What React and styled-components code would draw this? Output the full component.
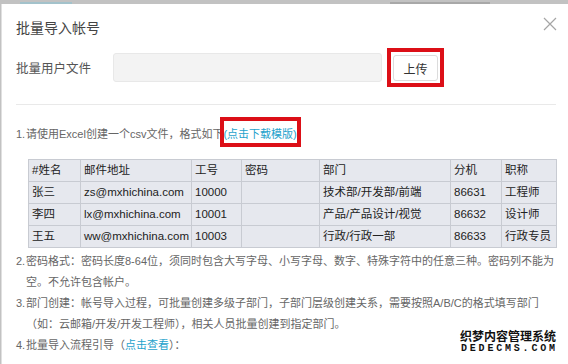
import React from "react";
import styled, { createGlobalStyle } from "styled-components";

const GlobalStyle = createGlobalStyle`
  html, body {
    margin: 0;
    padding: 0;
  }
  body {
    background: #c2c2c2;
    font-family: "Liberation Sans", "Noto Sans CJK SC", sans-serif;
    overflow: hidden;
  }
`;

const Strip = styled.div`
  height: 4px;
  display: flex;
  align-items: flex-end;
`;

const StripMark = styled.span`
  margin-left: ${p => p.$left}px;
  width: ${p => p.$width}px;
  height: 2px;
  background: ${p => p.$color};
  opacity: 0.45;
`;

const Modal = styled.div`
  position: relative;
  margin-left: 1px;
  height: 360px;
  background: #fff;
  border-left: 1px solid #e0e0e0;
  padding: 0 12px 0 14px;
  box-sizing: border-box;
  color: #666;
`;

const Header = styled.div`
  display: flex;
  justify-content: space-between;
  align-items: flex-start;
  padding-top: 13px;
  height: 34px;
  box-sizing: border-box;
`;

const Title = styled.div`
  margin-top: 1px;
  font-size: 14px;
  line-height: 20px;
  color: #444;
`;

const Close = styled.button`
  width: 14px;
  height: 14px;
  padding: 0;
  margin-right: -1px;
  border: 0;
  background: none;
  display: flex;
  cursor: pointer;
`;

const FormRow = styled.div`
  display: flex;
  align-items: center;
  margin-top: 10px;
  height: 39px;
`;

const Label = styled.div`
  width: 97px;
  font-size: 12.5px;
  color: #555;
`;

const FileInput = styled.div`
  width: 269px;
  height: 29px;
  box-sizing: border-box;
  background: #f3f3f3;
  border: 1px solid #e8e8e8;
  border-radius: 3px;
`;

const Highlight = styled.div`
  margin-left: 5px;
  border: 4px solid #dc0f17;
  padding: 3px 2px 2px 2px;
  display: flex;
`;

const UploadButton = styled.button`
  width: 45px;
  height: 26px;
  box-sizing: border-box;
  background: #fff;
  border: 1px solid #dcdcdc;
  border-radius: 3px;
  font-family: "Liberation Sans", "Noto Sans CJK SC", sans-serif;
  font-size: 12px;
  color: #333;
  padding: 0;
`;

const Divider = styled.div`
  margin-top: 17px;
  height: 1px;
  background: #e9e9e9;
`;

const Notes = styled.div`
  padding-top: 19px;
  font-size: 11px;
  line-height: 21px;
`;

const Item = styled.div`
  position: relative;
  display: flex;
  margin-top: ${p => p.$gap || 0}px;
`;

const Num = styled.span`
  flex: none;
  width: 10px;
`;

const Link = styled.a`
  color: #1ea2cc;
  text-decoration: none;
`;

/* red annotation frame laid over the template link */
const Frame = styled.span`
  position: absolute;
  left: 204px;
  top: -7px;
  width: 81px;
  height: 30px;
  box-sizing: border-box;
  border: 4px solid #dc0f17;
  pointer-events: none;
`;

const Table = styled.table`
  margin: 14px 0 0 12px;
  width: 528px;
  border-collapse: collapse;
  table-layout: fixed;
  background: #e6e8ee;
  font-size: 11.5px;
  color: #222;
`;

const Cell = styled.td`
  height: 21px;
  padding: 0 0 0 3px;
  border: 1px solid #c8cbd2;
  white-space: nowrap;
  overflow: hidden;
`;

const Watermark = styled.div`
  position: absolute;
  right: 12px;
  bottom: 10px;
  display: flex;
  flex-direction: column;
  align-items: center;
  color: #111;
  font-weight: bold;
  text-shadow: 0 0 1px #fff, 0 0 1px #fff;
`;

const MarkCn = styled.div`
  font-size: 12px;
  line-height: 14px;
  font-family: "Noto Sans CJK SC", sans-serif;
`;

const MarkEn = styled.div`
  font-family: "Liberation Mono", monospace;
  font-size: 10px;
  line-height: 11px;
  letter-spacing: 2.8px;
  margin-right: -2.8px;
`;

const widths = [52, 111, 50, 78, 131, 51, 55];

const rows = [
  ["#姓名", "邮件地址", "工号", "密码", "部门", "分机", "职称"],
  ["张三", "zs@mxhichina.com", "10000", "", "技术部/开发部/前端", "86631", "工程师"],
  ["李四", "lx@mxhichina.com", "10001", "", "产品/产品设计/视觉", "86632", "设计师"],
  ["王五", "ww@mxhichina.com", "10003", "", "行政/行政一部", "86633", "行政专员"]
];

const SampleTable = () => (
  <Table>
    <colgroup>
      {widths.map((w, i) => (
        <col key={i} style={{ width: w }} />
      ))}
    </colgroup>
    <tbody>
      {rows.map((r, i) => (
        <tr key={i}>
          {r.map((c, j) => (
            <Cell key={j}>{c}</Cell>
          ))}
        </tr>
      ))}
    </tbody>
  </Table>
);

const App = () => (
  <>
    <GlobalStyle />
    <Strip>
      <StripMark $left={20} $width={52} $color="#7fc4d6" />
      <StripMark $left={318} $width={100} $color="#8a8a8a" />
    </Strip>
    <Modal>
      <Header>
        <Title>批量导入帐号</Title>
        <Close aria-label="关闭">
          <svg width="14" height="14" viewBox="0 0 14 14">
            <path d="M1 1L13 13M13 1L1 13" stroke="#a5a5a5" strokeWidth="1.2" />
          </svg>
        </Close>
      </Header>
      <FormRow>
        <Label>批量用户文件</Label>
        <FileInput />
        <Highlight>
          <UploadButton>上传</UploadButton>
        </Highlight>
      </FormRow>
      <Divider />
      <Notes>
        <Item>
          <Num>1.</Num>
          <span>
            请使用Excel创建一个csv文件，格式如下
            <Link href="#">(点击下载模版)</Link>：
          </span>
          <Frame />
        </Item>
        <SampleTable />
        <Item $gap={3}>
          <Num>2.</Num>
          <span>
            密码格式：密码长度8-64位，须同时包含大写字母、小写字母、数字、特殊字符中的任意三种。密码列不能为空。不允许包含帐户。
          </span>
        </Item>
        <Item>
          <Num>3.</Num>
          <span>
            部门创建：帐号导入过程，可批量创建多级子部门，子部门层级创建关系，需要按照A/B/C的格式填写部门（如：云邮箱/开发/开发工程师），相关人员批量创建到指定部门。
          </span>
        </Item>
        <Item>
          <Num>4.</Num>
          <span>
            批量导入流程引导（<Link href="#">点击查看</Link>）：
          </span>
        </Item>
      </Notes>
      <Watermark>
        <MarkCn>织梦内容管理系统</MarkCn>
        <MarkEn>DEDECMS.COM</MarkEn>
      </Watermark>
    </Modal>
  </>
);

export default App;
